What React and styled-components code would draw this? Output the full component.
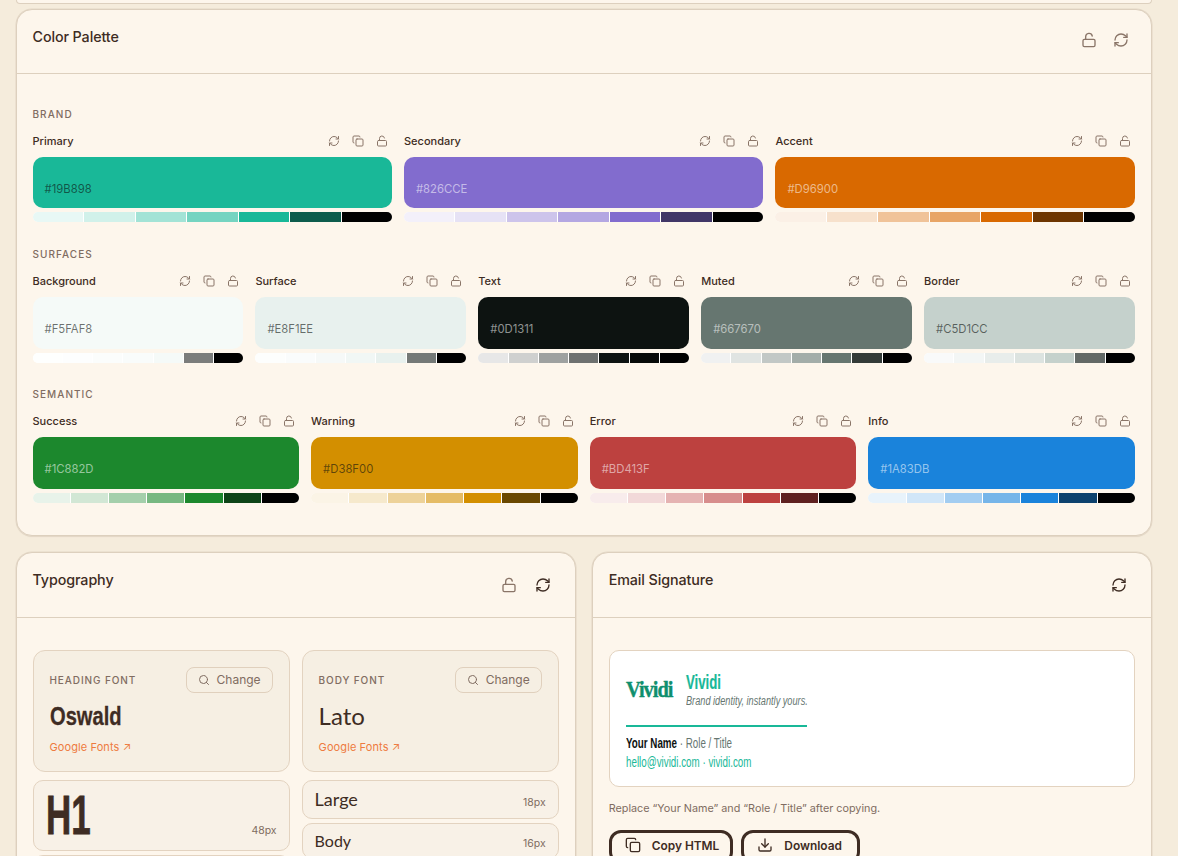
import React from "react";
import styled, { createGlobalStyle } from "styled-components";
import { RefreshCw, Copy, LockOpen, Search, Download } from "lucide-react";

const ink = "#3E2C23";
const muted = "#806C61";
const line = "#DDD0BE";
const sans = `"Inter", "Liberation Sans", sans-serif`;
const display = `"Liberation Sans", sans-serif`;

const Global = createGlobalStyle`
  html, body { margin: 0; height: 856px; overflow: hidden; background: #F5ECDC; }
  * { box-sizing: border-box; }
  body { font-family: ${sans}; color: ${ink}; }
`;

const Page = styled.div`
  padding: 0 26.1px 0 15.5px;
  display: flex;
  flex-direction: column;
`;
const Stub = styled.div`
  height: 3.5px;
  margin-bottom: 5.5px;
  background: #FDF6EC;
  border: 1px solid ${line};
  border-top: 0;
  border-radius: 0 0 16px 16px;
`;
const Card = styled.section`
  background: #FDF6EC;
  border: 1px solid ${line};
  border-radius: 16px;
  box-shadow: 0 0 0 0.5px #E3D7C6, 0 1px 1px #E3D7C6;
  min-width: 0;
`;
const Header = styled.header`
  height: ${(p) => p.$h}px;
  padding: 16px 16px 0;
  display: flex;
  justify-content: space-between;
  align-items: flex-start;
  border-bottom: 1px solid ${line};
`;
const Title = styled.h2`
  margin: 0;
  font-size: 14.3px;
  line-height: 22px;
  font-weight: 500;
  letter-spacing: -0.1px;
  color: ${ink};
`;
const HeaderActions = styled.div`
  display: flex;
  gap: ${(p) => p.$gap}px;
`;
const IconButton = styled.span`
  width: ${(p) => p.$size}px;
  height: ${(p) => p.$size}px;
  display: flex;
  align-items: center;
  justify-content: center;
  color: ${(p) => (p.$active ? ink : "#8A7568")};
`;
const Body = styled.div`
  padding: ${(p) => p.$pad};
`;
const Palette = styled.div`
  display: flex;
  flex-direction: column;
  gap: 25.5px;
`;
const GroupTitle = styled.h3`
  margin: 0 0 12.5px;
  font-size: 10px;
  line-height: 13px;
  font-weight: 500;
  letter-spacing: 1.05px;
  color: ${muted};
`;
const ColorGrid = styled.div`
  display: grid;
  grid-template-columns: repeat(${(p) => p.$cols}, 1fr);
  gap: 12px;
`;
const ColorHead = styled.div`
  height: 15.4px;
  margin-bottom: 8.1px;
  display: flex;
  align-items: center;
  justify-content: space-between;
`;
const ColorName = styled.span`
  font-size: 11px;
  font-weight: 500;
  color: ${ink};
`;
const MiniActions = styled.div`
  display: flex;
  gap: 12px;
  padding-right: 4px;
  color: #8A7568;
`;
const Swatch = styled.div`
  height: 51.8px;
  border-radius: 10px;
  padding: 0 12px 11.5px;
  display: flex;
  align-items: flex-end;
  background: ${(p) => p.$bg};
`;
const Hex = styled.span`
  font-size: 11.3px;
  line-height: 16px;
  color: ${(p) => (p.$dark ? "rgba(13,19,17,.6)" : "rgba(255,255,255,.55)")};
`;
const Strip = styled.div`
  height: 10px;
  margin-top: 4px;
  display: flex;
  gap: 1px;
  background: #fff;
  border-radius: 5px;
  overflow: hidden;
`;
const Shade = styled.div`
  flex: 1;
  background: ${(p) => p.$bg};
`;
const Columns = styled.div`
  margin-top: 16px;
  display: grid;
  grid-template-columns: 1fr 1fr;
  gap: 16px;
`;
const FontGrid = styled.div`
  display: grid;
  grid-template-columns: 1fr 1fr;
  gap: 12px;
`;
const FontColumn = styled.div`
  display: flex;
  flex-direction: column;
  gap: 4px;
`;
const FontCard = styled.div`
  height: 122px;
  padding: 16px;
  margin-bottom: 4px;
  background: #F6EFE3;
  border: 1px solid #E3D3C0;
  border-radius: 12px;
`;
const FontTop = styled.div`
  display: flex;
  justify-content: space-between;
  align-items: center;
`;
const FontLabel = styled.span`
  font-size: 10px;
  font-weight: 500;
  letter-spacing: 0.9px;
  color: ${muted};
`;
const ChangeButton = styled.span`
  height: 26px;
  padding: 0 11px 0 10.5px;
  display: flex;
  align-items: center;
  gap: 7px;
  font-size: 12px;
  color: ${muted};
  background: #F6EFE3;
  border: 1px solid #E0D0BD;
  border-radius: 8px;
`;
const OswaldName = styled.div`
  margin-top: 9px;
  font-family: ${display};
  font-size: 26.5px;
  line-height: 29px;
  font-weight: 700;
  color: ${ink};
  -webkit-text-stroke: 0.3px ${ink};
  transform: scaleX(0.76);
  transform-origin: left center;
`;
const LatoName = styled.div`
  margin-top: 8px;
  font-family: "Lato", sans-serif;
  font-size: 24px;
  line-height: 30px;
  color: ${ink};
`;
const FontLink = styled.div`
  margin-top: 9px;
  font-size: 11px;
  line-height: 14px;
  letter-spacing: 0.1px;
  color: #EE7B40;
`;
const SampleRow = styled.div`
  height: ${(p) => p.$h}px;
  padding: 0 12px;
  display: flex;
  align-items: baseline;
  justify-content: space-between;
  background: #F8F1E7;
  border: 1px solid #E3D3C0;
  border-radius: 10px;
  overflow: hidden;
`;
const H1Sample = styled.span`
  display: inline-block;
  width: 44px;
  font-family: ${display};
  font-size: 55.5px;
  line-height: 68px;
  font-weight: 700;
  color: ${ink};
  -webkit-text-stroke: 0.8px ${ink};
  white-space: nowrap;
  transform: scaleX(0.63);
  transform-origin: left center;
`;
const LatoSample = styled.span`
  font-family: "Lato", sans-serif;
  font-size: ${(p) => p.$size}px;
  line-height: ${(p) => p.$lh}px;
  color: ${ink};
`;
const SizeTag = styled.span`
  font-size: 10.5px;
  color: ${muted};
`;
const Signature = styled.div`
  height: 137px;
  padding: 16px;
  background: #fff;
  border: 1px solid #E3D3C0;
  border-radius: 10px;
`;
const SigTop = styled.div`
  width: 181px;
  height: 60px;
  padding-bottom: 16px;
  display: flex;
  align-items: center;
  gap: 13px;
  border-bottom: 2px solid #19B898;
`;
const LogoMark = styled.span`
  display: inline-block;
  width: 47px;
  margin-top: 4px;
  font-family: "Liberation Serif", serif;
  font-size: 24px;
  font-weight: 700;
  letter-spacing: -1.2px;
  color: #0F8F6E;
  -webkit-text-stroke: 0.4px #0F8F6E;
  white-space: nowrap;
  transform: scaleX(0.85);
  transform-origin: left center;
`;
const SigBrand = styled.div`
  width: 121px;
  margin-top: 3px;
  display: flex;
  flex-direction: column;
`;
const SigName = styled.span`
  font-family: ${display};
  font-size: 20px;
  line-height: 24px;
  font-weight: 700;
  color: #19B898;
  -webkit-text-stroke: 0.2px #19B898;
  transform: scaleX(0.66);
  transform-origin: left center;
`;
const SigTag = styled.span`
  font-family: ${display};
  font-size: 12px;
  line-height: 15px;
  font-style: italic;
  color: #667670;
  white-space: nowrap;
  transform: scaleX(0.765);
  transform-origin: left center;
`;
const SigPerson = styled.div`
  margin-top: 7px;
  font-family: ${display};
  font-size: 14px;
  line-height: 18px;
  color: #667670;
  white-space: nowrap;
  transform: scaleX(0.7);
  transform-origin: left center;
  & b { color: #0D1311; }
`;
const SigContact = styled.div`
  margin-top: 1px;
  font-family: ${display};
  font-size: 14px;
  line-height: 18px;
  color: #19B898;
  white-space: nowrap;
  transform: scaleX(0.7);
  transform-origin: left center;
`;
const Helper = styled.p`
  margin: 15px 0 14px;
  font-size: 10.8px;
  line-height: 14px;
  color: ${muted};
`;
const ButtonRow = styled.div`
  display: flex;
  gap: 8px;
`;
const OutlineButton = styled.span`
  height: 34px;
  padding: 0 ${(p) => p.$pr}px 3px 13px;
  display: flex;
  align-items: center;
  gap: 11px;
  font-size: 11.9px;
  font-weight: 600;
  color: ${ink};
  border: 3px solid ${ink};
  border-radius: 12px;
`;

const mix = (hex, target, amount) => {
  const n = parseInt(hex.slice(1), 16);
  const c = [n >> 16, (n >> 8) & 255, n & 255];
  return `rgb(${c.map((v) => Math.round(v * amount + target * (1 - amount))).join(",")})`;
};
const shades = (hex) => [
  mix(hex, 255, 0.1),
  mix(hex, 255, 0.2),
  mix(hex, 255, 0.4),
  mix(hex, 255, 0.6),
  hex,
  mix(hex, 0, 0.5),
  "#000",
];

const groups = [
  { title: "BRAND", colors: [["Primary", "#19B898", 1], ["Secondary", "#826CCE"], ["Accent", "#D96900"]] },
  {
    title: "SURFACES",
    colors: [["Background", "#F5FAF8", 1], ["Surface", "#E8F1EE", 1], ["Text", "#0D1311"], ["Muted", "#667670"], ["Border", "#C5D1CC", 1]],
  },
  {
    title: "SEMANTIC",
    colors: [["Success", "#1C882D"], ["Warning", "#D38F00", 1], ["Error", "#BD413F"], ["Info", "#1A83DB"]],
  },
];

function ColorItem({ name, hex, dark }) {
  return (
    <div>
      <ColorHead>
        <ColorName>{name}</ColorName>
        <MiniActions>
          <RefreshCw size={12} />
          <Copy size={12} />
          <LockOpen size={12} />
        </MiniActions>
      </ColorHead>
      <Swatch $bg={hex}>
        <Hex $dark={dark}>{hex}</Hex>
      </Swatch>
      <Strip>
        {shades(hex).map((s, i) => (
          <Shade key={i} $bg={s} />
        ))}
      </Strip>
    </div>
  );
}

export default function App() {
  return (
    <Page>
      <Global />
      <Stub />
      <Card>
        <Header $h={64}>
          <Title>Color Palette</Title>
          <HeaderActions $gap={4}>
            <IconButton $size={28}><LockOpen size={16} /></IconButton>
            <IconButton $size={28}><RefreshCw size={16} /></IconButton>
          </HeaderActions>
        </Header>
        <Body $pad="33.6px 16px 31.9px">
          <Palette>
            {groups.map((g) => (
              <div key={g.title}>
                <GroupTitle>{g.title}</GroupTitle>
                <ColorGrid $cols={g.colors.length}>
                  {g.colors.map(([n, h, d]) => (
                    <ColorItem key={n} name={n} hex={h} dark={d} />
                  ))}
                </ColorGrid>
              </div>
            ))}
          </Palette>
        </Body>
      </Card>
      <Columns>
        <Card>
          <Header $h={65}>
            <Title>Typography</Title>
            <HeaderActions $gap={2}>
              <IconButton $size={32}><LockOpen size={16} /></IconButton>
              <IconButton $size={32} $active><RefreshCw size={16} /></IconButton>
            </HeaderActions>
          </Header>
          <Body $pad="32px 16px">
            <FontGrid>
              <FontColumn>
                <FontCard>
                  <FontTop>
                    <FontLabel>HEADING FONT</FontLabel>
                    <ChangeButton><Search size={12} />Change</ChangeButton>
                  </FontTop>
                  <OswaldName>Oswald</OswaldName>
                  <FontLink>Google Fonts ↗</FontLink>
                </FontCard>
                <SampleRow $h={71}>
                  <H1Sample>H1</H1Sample>
                  <SizeTag>48px</SizeTag>
                </SampleRow>
                <SampleRow $h={40} />
              </FontColumn>
              <FontColumn>
                <FontCard>
                  <FontTop>
                    <FontLabel>BODY FONT</FontLabel>
                    <ChangeButton><Search size={12} />Change</ChangeButton>
                  </FontTop>
                  <LatoName>Lato</LatoName>
                  <FontLink>Google Fonts ↗</FontLink>
                </FontCard>
                <SampleRow $h={39}>
                  <LatoSample $size={18} $lh={36}>Large</LatoSample>
                  <SizeTag>18px</SizeTag>
                </SampleRow>
                <SampleRow $h={36}>
                  <LatoSample $size={16} $lh={33}>Body</LatoSample>
                  <SizeTag>16px</SizeTag>
                </SampleRow>
              </FontColumn>
            </FontGrid>
          </Body>
        </Card>
        <Card>
          <Header $h={65}>
            <Title>Email Signature</Title>
            <HeaderActions $gap={0}>
              <IconButton $size={32} $active><RefreshCw size={16} /></IconButton>
            </HeaderActions>
          </Header>
          <Body $pad="32px 16px">
            <Signature>
              <SigTop>
                <LogoMark>Vividi</LogoMark>
                <SigBrand>
                  <SigName>Vividi</SigName>
                  <SigTag>Brand identity, instantly yours.</SigTag>
                </SigBrand>
              </SigTop>
              <SigPerson><b>Your Name</b> · Role / Title</SigPerson>
              <SigContact>hello@vividi.com · vividi.com</SigContact>
            </Signature>
            <Helper>Replace “Your Name” and “Role / Title” after copying.</Helper>
            <ButtonRow>
              <OutlineButton $pr={11}><Copy size={16} />Copy HTML</OutlineButton>
              <OutlineButton $pr={15}><Download size={16} />Download</OutlineButton>
            </ButtonRow>
          </Body>
        </Card>
      </Columns>
    </Page>
  );
}
